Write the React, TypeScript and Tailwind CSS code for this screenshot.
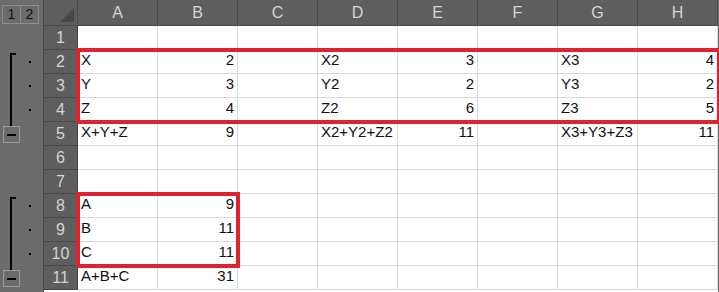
import React from 'react';

type Cell = string | number | null;

const COLS = ['A', 'B', 'C', 'D', 'E', 'F', 'G', 'H'];

const ROWS: Cell[][] = [
  [null, null, null, null, null, null, null, null],
  ['X', 2, null, 'X2', 3, null, 'X3', 4],
  ['Y', 3, null, 'Y2', 2, null, 'Y3', 2],
  ['Z', 4, null, 'Z2', 6, null, 'Z3', 5],
  ['X+Y+Z', 9, null, 'X2+Y2+Z2', 11, null, 'X3+Y3+Z3', 11],
  [null, null, null, null, null, null, null, null],
  [null, null, null, null, null, null, null, null],
  ['A', 9, null, null, null, null, null, null],
  ['B', 11, null, null, null, null, null, null],
  ['C', 11, null, null, null, null, null, null],
  ['A+B+C', 31, null, null, null, null, null, null],
];

// outline kind per row: start / mid / end (minus button) / none
const OUTLINE: Array<'none' | 'start' | 'mid' | 'end'> = [
  'none', 'start', 'mid', 'mid', 'end', 'none', 'none', 'start', 'mid', 'mid', 'end',
];

const OutlineRow: React.FC<{ kind: 'none' | 'start' | 'mid' | 'end' }> = ({ kind }) => {
  if (kind === 'none') return <div className="h-[24px]" />;
  if (kind === 'end') {
    return (
      <div className="h-[24px] flex flex-col pl-[3px]">
        <div className="ml-[7px] h-[4px] w-[2px] bg-black" />
        <div className="w-[17px] h-[17px] border border-[#9a9a9a] flex items-center justify-center">
          <div className="w-[9px] h-[2px] bg-black" />
        </div>
      </div>
    );
  }
  return (
    <div className="h-[24px] flex items-stretch">
      <div className={`w-[22px] pl-[10px] ${kind === 'start' ? 'pt-[3px]' : ''}`}>
        {kind === 'start' ? (
          <div className="w-[6px] h-full border-l-2 border-t-2 border-black" />
        ) : (
          <div className="w-[2px] h-full bg-black" />
        )}
      </div>
      <div className="flex items-center pl-[7px]">
        <div className="w-[2px] h-[2px] bg-black" />
      </div>
    </div>
  );
};

export default function App() {
  return (
    <div
      className="relative w-[719px] h-[292px] overflow-hidden flex bg-[#6b6b6b] select-none"
      style={{ fontFamily: '"Liberation Sans", Arial, sans-serif' }}
    >
      {/* outline strip */}
      <div className="w-[44px] shrink-0 border-r border-[#4a4a4a] flex flex-col">
        <div className="h-[26px] flex items-start pt-[5px] pl-[2px]">
          <div className="w-[19px] h-[19px] border border-[#8d8d8d] flex items-center justify-center text-[14px] text-[#111]">1</div>
          <div className="w-[19px] h-[19px] border border-[#8d8d8d] -ml-px flex items-center justify-center text-[14px] text-[#111]">2</div>
        </div>
        {OUTLINE.map((k, i) => (
          <OutlineRow key={i} kind={k} />
        ))}
      </div>

      {/* sheet */}
      <div className="grid grid-cols-[34px_repeat(8,80px)] grid-rows-[26px_repeat(11,24px)] bg-white">
        <div className="bg-[#5e5e5e] border-r border-b border-[#4a4a4a] flex items-end justify-end pr-[3px] pb-[3px]">
          <svg width="14" height="14" viewBox="0 0 14 14">
            <polygon points="14,0 14,14 0,14" fill="#474747" />
          </svg>
        </div>
        {COLS.map((c) => (
          <div
            key={c}
            className="bg-[#5e5e5e] border-r border-b border-[#474747] flex items-center justify-center text-[16px] text-[#d4d4d4]"
          >
            {c}
          </div>
        ))}
        {ROWS.map((row, r) => (
          <React.Fragment key={r}>
            <div className="bg-[#5e5e5e] border-r border-b border-[#474747] flex items-center justify-center text-[16px] text-[#d4d4d4]">
              {r + 1}
            </div>
            {row.map((v, c) => (
              <div
                key={c}
                className={`border-r border-b border-[#d9d9d9] flex items-end pb-[2px] px-[3px] text-[15px] text-[#111] whitespace-nowrap ${
                  typeof v === 'number' ? 'justify-end' : 'justify-start'
                }`}
              >
                {v}
              </div>
            ))}
          </React.Fragment>
        ))}
      </div>

      {/* highlight boxes */}
      <div className="absolute left-[76px] top-[48px] w-[645px] h-[76px] border-4 border-[#dc2330]" />
      <div className="absolute left-[76px] top-[192px] w-[164px] h-[76px] border-4 border-[#dc2330]" />
    </div>
  );
}
